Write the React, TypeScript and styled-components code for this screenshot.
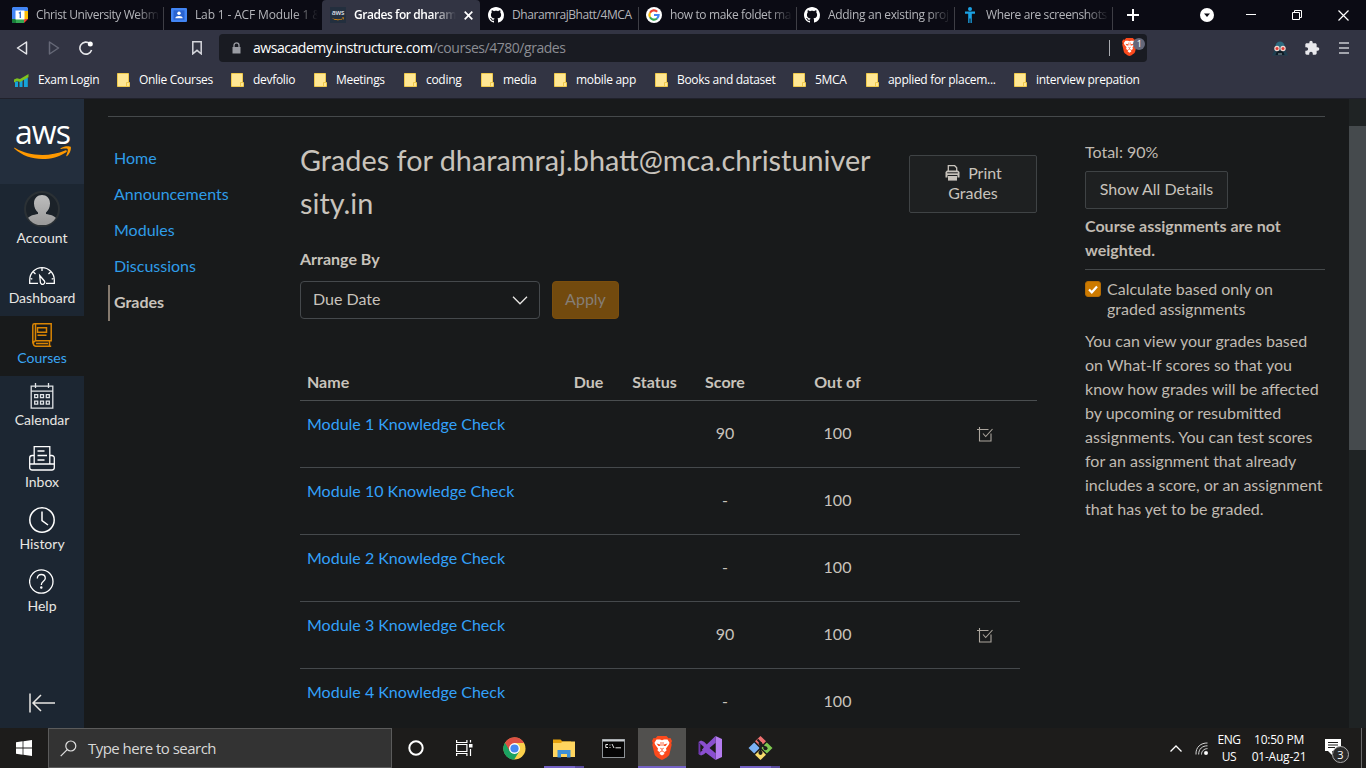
import React from "react";
import styled, { createGlobalStyle, css } from "styled-components";

const GlobalStyle = createGlobalStyle`
  * { box-sizing: border-box; }
  html, body { margin: 0; padding: 0; background: #181a1b; overflow: hidden; }
  svg { display: block; flex: none; }
`;

const ui = `"Open Sans", "Noto Sans", sans-serif`;
const lato = `Lato, "Open Sans", sans-serif`;

const Screen = styled.div`
  width: 1366px;
  height: 768px;
  display: flex;
  flex-direction: column;
  overflow: hidden;
  background: #181a1b;
`;

/* ---------- browser chrome ---------- */
const TabStrip = styled.div`
  height: 30px;
  flex: none;
  display: flex;
  padding-left: 5px;
  background: #0b0b14;
`;

const Tab = styled.div<{ $w?: number; $pad?: number; $active?: boolean; $line?: boolean }>`
  width: ${(p) => p.$w ?? 158}px;
  height: 30px;
  flex: none;
  display: flex;
  align-items: center;
  gap: 8px;
  padding: 0 ${(p) => (p.$active ? 7 : 4)}px 0 ${(p) => p.$pad ?? 7}px;
  color: ${(p) => (p.$active ? "#fff" : "#b4b5ba")};
  font: ${(p) => (p.$active ? 600 : 400)} 12px/30px ${ui};
  ${(p) => p.$active && css`background: #323443; border-radius: 4px 4px 0 0;`}
  ${(p) =>
    p.$line &&
    css`
      background: linear-gradient(#3e3e45, #3e3e45) right 0 bottom 0 / 1px 23px no-repeat;
    `}
`;

const TabTitle = styled.div<{ $spacing: number; $fade?: boolean }>`
  flex: 1;
  min-width: 0;
  overflow: hidden;
  white-space: nowrap;
  letter-spacing: ${(p) => p.$spacing}px;
  ${(p) => p.$fade && css`mask-image: linear-gradient(90deg, #000 calc(100% - 24px), transparent);`}
`;

const WindowButtons = styled.div`
  flex: 1;
  display: flex;
  align-items: center;
  height: 30px;
  padding-left: 14px;
`;

const Gap = styled.span<{ $w: number }>`
  flex: none;
  width: ${(p) => p.$w}px;
`;

const Toolbar = styled.div`
  height: 36px;
  flex: none;
  display: flex;
  align-items: center;
  background: #323443;
  padding-left: 15px;
`;

const AddressBar = styled.div`
  width: 928px;
  height: 28px;
  flex: none;
  display: flex;
  align-items: center;
  margin-left: 15px;
  padding: 0 0 0 13px;
  border-radius: 4px;
  background: #191b22;
  color: #8b8d93;
  font: 400 14px/28px ${ui};
  letter-spacing: -0.46px;
`;

const Address = styled.div`
  flex: 1;
  padding-left: 12px;
  white-space: nowrap;
  b { font-weight: 400; color: #fff; }
`;

const ShieldWrap = styled.div`
  position: relative;
  width: 25px;
  height: 20px;
  margin-left: 10px;
`;

const ShieldCount = styled.span`
  position: absolute;
  left: 11px;
  top: 0;
  width: 12px;
  height: 12px;
  border-radius: 6px;
  background: #646779;
  color: #fff;
  font: 400 9px/12px ${ui};
  text-align: center;
`;

const Bookmarks = styled.div`
  height: 33px;
  flex: none;
  display: flex;
  background: #323443;
  border-bottom: 1px solid #20212b;
  padding-left: 14px;
`;

const Bookmark = styled.div<{ $w: number }>`
  width: ${(p) => p.$w}px;
  flex: none;
  display: flex;
  align-items: center;
  gap: 9px;
  height: 28px;
  white-space: nowrap;
  color: #fff;
  font: 400 12px/28px ${ui};
  letter-spacing: -0.3px;
`;

/* ---------- page ---------- */
const Page = styled.div`
  height: 629px;
  flex: none;
  display: flex;
  overflow: hidden;
  font-family: ${lato};
  color: #c8c3bc;
`;

const Rail = styled.nav`
  width: 84px;
  flex: none;
  display: flex;
  flex-direction: column;
  background: #1c2632;
`;

const RailLogo = styled.div`
  height: 85px;
  display: flex;
  flex-direction: column;
  align-items: center;
  background: #232e3d;
  color: #fff;
  padding: 13px 0 0 1px;
  font: 400 32px/40px "Open Sans", sans-serif;
  letter-spacing: -1px;
  svg { margin-top: -6px; }
`;

const RailItem = styled.div<{ $h: number; $icon: number; $active?: boolean }>`
  height: ${(p) => p.$h}px;
  flex: none;
  display: flex;
  flex-direction: column;
  align-items: center;
  justify-content: flex-end;
  padding-bottom: 8px;
  background: ${(p) => (p.$active ? "#181a1b" : "transparent")};
  color: ${(p) => (p.$active ? "#3aa6f5" : "#e8e6e3")};
  font: 400 14px/20px ${lato};
  svg { margin-bottom: ${(p) => p.$icon}px; }
`;

const Collapse = styled.div`
  margin-top: auto;
  padding: 0 0 15px 28px;
`;

const Body = styled.div`
  width: 1265px;
  flex: none;
  display: flex;
  flex-direction: column;
  padding: 17px 24px 0;
`;

const Columns = styled.div`
  display: flex;
  border-top: 1px solid #45494b;
`;

const CourseNav = styled.nav`
  width: 192px;
  flex: none;
  padding-top: 24px;
`;

const CourseLink = styled.div<{ $active?: boolean }>`
  height: 36px;
  padding-left: ${(p) => (p.$active ? 4 : 6)}px;
  border-left: ${(p) => (p.$active ? "2px solid #857a6e" : "none")};
  color: ${(p) => (p.$active ? "#c8c3bc" : "#2f9de8")};
  font: ${(p) => (p.$active ? 700 : 400)} 16px/34px ${lato};
`;

const Main = styled.main`
  width: 737px;
  flex: none;
  padding-top: 22px;
`;

const TitleRow = styled.div`
  display: flex;
  justify-content: space-between;
  height: 109px;
`;

const Title = styled.h1`
  margin: 0;
  width: 576px;
  font: 400 28.8px/43px ${lato};
  white-space: nowrap;
`;

const OutlineButton = styled.button`
  padding: 0;
  display: flex;
  flex-direction: column;
  align-items: center;
  justify-content: center;
  border: 1px solid #3f4345;
  border-radius: 2px;
  background: #1e2021;
  color: #c8c3bc;
  font: 400 16px/20px ${lato};
`;

const PrintButton = styled(OutlineButton)`
  width: 128px;
  height: 58px;
  margin-top: 16px;
  padding-bottom: 2px;
  span { display: flex; align-items: center; gap: 8px; padding-left: 1px; }
`;

const DetailsButton = styled(OutlineButton)`
  width: 143px;
  height: 38px;
  margin-top: 7px;
  padding-bottom: 2px;
`;

const FieldLabel = styled.div`
  height: 24px;
  font: 700 16px/22px ${lato};
`;

const Controls = styled.div`
  display: flex;
  gap: 12px;
  margin-top: 9px;
`;

const Select = styled.div`
  width: 240px;
  height: 38px;
  display: flex;
  align-items: center;
  justify-content: space-between;
  padding: 0 11px 0 12px;
  border: 1px solid #45494c;
  border-radius: 4px;
  font: 400 16px/20px ${lato};
  span { padding-bottom: 2px; }
`;

const Apply = styled.button`
  width: 67px;
  height: 38px;
  padding: 0 0 2px;
  border: 1px solid #7a4e0d;
  border-radius: 4px;
  background: #724a0e;
  color: #857e76;
  font: 400 16px/20px ${lato};
`;

const gridColumns = css`
  display: grid;
  grid-template-columns: 260px 57px 75px 66px 159px 103px;
  font-size: 16px;
`;

const TableHead = styled.div`
  ${gridColumns}
  height: 37px;
  margin-top: 45px;
  border-bottom: 1px solid #4a4e50;
  font: 700 16px/36px ${lato};
  text-align: center;
  span:first-child { text-align: left; padding-left: 7px; }
`;

const TableRow = styled.div`
  ${gridColumns}
  width: 720px;
  height: 67px;
  border-bottom: 1px solid #45494c;
  line-height: 64px;
  text-align: center;
`;

const AssignmentName = styled.a`
  padding-left: 7px;
  line-height: 46px;
  text-align: left;
  color: #33a1fa;
`;

const CheckCell = styled.div`
  display: flex;
  align-items: center;
  padding-left: 60px;
`;

const Aside = styled.aside`
  width: 240px;
  flex: none;
  margin-left: 48px;
  padding-top: 23px;
  font: 400 16px/24px ${lato};
  color: #c0bab2;
`;

const Weighted = styled.div`
  height: 57px;
  margin-top: 4px;
  padding-top: 1px;
  font-weight: 700;
  border-bottom: 1px solid #45494b;
`;

const CheckLabel = styled.div`
  display: flex;
  gap: 6px;
  padding-top: 9px;
  line-height: 20px;
`;

const CheckBox = styled.span`
  width: 16px;
  height: 16px;
  flex: none;
  margin-top: 2px;
  display: flex;
  align-items: center;
  justify-content: center;
  border: 1px solid #b56c04;
  border-radius: 3px;
  background: #cc7a00;
`;

const Explain = styled.p`
  margin: 10px 0 0;
  white-space: nowrap;
`;

const ScrollTrack = styled.div`
  width: 17px;
  flex: none;
  padding-top: 27px;
  background: #1f2324;
`;

const ScrollThumb = styled.div`
  height: 324px;
  background: #454a4d;
`;

/* ---------- taskbar ---------- */
const Taskbar = styled.div`
  height: 40px;
  flex: none;
  display: flex;
  background: #1d1c1b;
  color: #fff;
`;

const Start = styled.div`
  width: 48px;
  height: 40px;
  display: flex;
  align-items: center;
  justify-content: center;
`;

const Search = styled.div`
  width: 344px;
  height: 40px;
  display: flex;
  align-items: center;
  gap: 11px;
  padding-left: 11px;
  border: 1px solid #5b5b5b;
  background: #333;
  color: #d8d8d8;
  font: 400 15px/38px ${ui};
  letter-spacing: -0.53px;
`;

const TaskIcon = styled.div<{ $w: number; $on?: boolean; $line?: boolean }>`
  width: ${(p) => p.$w}px;
  height: 40px;
  flex: none;
  display: flex;
  align-items: center;
  justify-content: center;
  background: ${(p) => (p.$on ? "#51504e" : "transparent")};
  ${(p) =>
    p.$line &&
    css`
      background: linear-gradient(90deg, #7462c4 0 31px, #57499a 31px 40px) center bottom / 40px 2px no-repeat;
    `}
  ${(p) => p.$on && css`box-shadow: inset 0 -2px #7462c4;`}
`;

const Tray = styled.div`
  margin-left: auto;
  width: 198px;
  display: flex;
  align-items: center;
`;

const TrayText = styled.div<{ $w: number; $ml: number; $spacing: number }>`
  width: ${(p) => p.$w}px;
  margin-left: ${(p) => p.$ml}px;
  padding-bottom: 1px;
  text-align: center;
  white-space: nowrap;
  font: 400 12px/17px ${ui};
  letter-spacing: ${(p) => p.$spacing}px;
`;

const Notice = styled.div`
  position: relative;
  width: 26px;
  height: 26px;
  margin: 8px 0 0 17px;
`;

const NoticeCount = styled.span`
  position: absolute;
  left: 7px;
  top: 7px;
  width: 17px;
  height: 17px;
  border: 1px solid #aaa;
  border-radius: 9px;
  background: #2b2b2b;
  font: 400 11px/15px ${ui};
  text-align: center;
`;

const ShowDesktop = styled.div`
  width: 5px;
  height: 40px;
  margin-left: auto;
  border-left: 1px solid #6a6a6a;
`;

/* ---------- drawings ---------- */
const GithubIcon = () => (
  <svg width="16" height="16" viewBox="0 0 16 16" fill="#fff">
    <path d="M8 0C3.58 0 0 3.58 0 8c0 3.54 2.29 6.53 5.47 7.59.4.07.55-.17.55-.38 0-.19-.01-.82-.01-1.49-2.01.37-2.53-.49-2.69-.94-.09-.23-.48-.94-.82-1.13-.28-.15-.68-.52-.01-.53.63-.01 1.08.58 1.23.82.72 1.21 1.87.87 2.33.66.07-.52.28-.87.51-1.07-1.78-.2-3.64-.89-3.64-3.95 0-.87.31-1.59.82-2.15-.08-.2-.36-1.02.08-2.12 0 0 .67-.21 2.2.82.64-.18 1.32-.27 2-.27s1.36.09 2 .27c1.53-1.04 2.2-.82 2.2-.82.44 1.1.16 1.92.08 2.12.51.56.82 1.27.82 2.15 0 3.07-1.87 3.75-3.65 3.95.29.25.54.73.54 1.48 0 1.07-.01 1.93-.01 2.2 0 .21.15.46.55.38A8.01 8.01 0 0 0 16 8c0-4.42-3.58-8-8-8z" />
  </svg>
);

const CalendarFavicon = () => (
  <svg width="16" height="16" viewBox="0 0 16 16">
    <path d="M1 0h14l1 1v3h-4v8H4v4H1l-1-1V1z" fill="#4285f4" />
    <path d="M12 4h4v8h-4z" fill="#fbbc04" />
    <path d="M4 12h8v4H4z" fill="#34a853" />
    <path d="M0 12h4v4H1l-1-1z" fill="#188038" />
    <path d="M12 12h4l-4 4z" fill="#ea4335" />
    <path d="M3.5 3.5h9v9h-9z" fill="#fff" />
    <path d="M6.800 6.300 8.300 5.400V11" fill="none" stroke="#2f6fd8" strokeWidth="1.300" />
  </svg>
);

const ClassroomFavicon = () => (
  <svg width="16" height="16" viewBox="0 0 16 16">
    <rect y="1" width="16" height="14" rx="1" fill="#4285f4" />
    <rect x="2.500" y="3.300" width="11" height="9.400" fill="#2a63d0" />
    <circle cx="8" cy="6.300" r="1.700" fill="#fff" />
    <path d="M4.300 11.200c0-3 7.400-3 7.400 0z" fill="#fff" />
  </svg>
);

const Smile = ({ w, h }: { w: number; h: number }) => (
  <svg width={w} height={h} viewBox="0 0 57 14" fill="#ff9900">
    <path d="M.3 2.600C-.2 1.800.5 1.500 1.200 2 15 10.500 36 11 51 4.500c1.400-.6 2.600.7 1.200 1.700C37 16.200 14 15.500.3 2.600z" />
    <path d="M46.500 2.300C49.500-.1 55.500-.3 56.600.7c1 1.200-.4 7-3.400 9.300-.7.5-1.200.1-.9-.6.9-2.200 2-5.500 1.300-6.300-.7-.9-4.400-.5-6.400-.2-.8.1-1-.2-.7-.6z" />
  </svg>
);

const AwsFavBox = styled.div`
  width: 16px;
  height: 16px;
  flex: none;
  display: flex;
  flex-direction: column;
  align-items: center;
  background: #232f3e;
  color: #d9dce0;
  font: 600 7px/6px "Open Sans", sans-serif;
  padding-top: 3px;
  letter-spacing: -0.2px;
  svg { margin-top: 1px; }
`;

const GoogleFavicon = () => (
  <svg width="16" height="16" viewBox="0 0 16 16">
    <circle cx="8" cy="8" r="8" fill="#fff" />
    <g fill="none" strokeWidth="2.200">
      <path d="M4 5.700A4.600 4.600 0 0 1 11.200 4.700" stroke="#ea4335" />
      <path d="M4 5.700A4.600 4.600 0 0 0 4 10.300" stroke="#fbbc05" />
      <path d="M4 10.300A4.600 4.600 0 0 0 11 11.500" stroke="#34a853" />
      <path d="M11 11.500A4.600 4.600 0 0 0 12.600 8H8" stroke="#4285f4" />
    </g>
  </svg>
);

const PersonFavicon = () => (
  <svg width="16" height="16" viewBox="0 0 16 16" fill="#1ba1e2">
    <circle cx="8" cy="2" r="2" />
    <path d="M3 4.600h10v2.200H9.800V16H8.500v-4.500h-1V16H6.200V6.800H3z" />
  </svg>
);

const Folder = () => (
  <svg width="13" height="14" viewBox="0 0 13 14">
    <path d="M.5.5h11v9h1v4H.5z" fill="#ffe794" stroke="#efc94c" />
    <path d="M9.500 13.500v-4h2" fill="none" stroke="#efc94c" />
  </svg>
);

const ExamIcon = () => (
  <svg width="15" height="13" viewBox="0 0 15 13">
    <path d="M1 7.500h3V13H1zM5.500 6H8.500v7h-3zM10 4h3.800v9H10z" fill="#16a3d8" />
    <path d="M0 5.500 3 4.200l3 .8L14.500 0v3.200L6 8 3 7 0 8.500z" fill="#7fc21e" />
  </svg>
);

const Lion = ({ w, h }: { w: number; h: number }) => (
  <svg width={w} height={h} viewBox="0 0 20 24">
    <path d="M5.500 0h9l2 2.200 2-.2L20 5l-.8 2 .5 1.800-2.300 9.700c-.6 2-5 4.500-7.400 5.500-2.400-1-6.800-3.500-7.400-5.500L.3 8.800.8 7 0 5l1.500-3 2 .2z" fill="#fb4a1d" />
    <path d="m10 4.200 2-.6 3.500-.1 2 3.300-.6 1.800-2.900 3.800.5 2.200-2.400 1.800.3 1.500L10 19.500l-2.400-1.600.3-1.500-2.400-1.800.5-2.200-2.900-3.800-.6-1.800 2-3.300 3.500.1z" fill="#fff" />
    <path d="m4.500 7.600 3.800.8-.4 1.500-1.500.2zM15.500 7.600l-3.800.8.4 1.500 1.500.2z" fill="#fb4a1d" />
    <path d="m8.200 12.200 1.800.9 1.800-.9M10 13v2M7.500 16.300l2.500-1.400 2.500 1.400M9 6v4M11 6v4" fill="none" stroke="#fb4a1d" strokeWidth=".8" />
  </svg>
);

const VaderIcon = () => (
  <svg width="16" height="15" viewBox="0 0 16 15">
    <path d="M3 5C4-.5 12-.5 13 5l1 5 2 4.500H0L2 10z" fill="#1f3f50" />
    <path d="M3.500 4.500C4.500-.8 11.500-.8 12.500 4.500L12 6.500H4z" fill="#2d6c80" />
    <path d="M5 10h6l1.500 4h-9z" fill="#0f1c25" />
    <circle cx="5" cy="7.500" r="2.700" fill="#f3d9d2" /><circle cx="11" cy="7.500" r="2.700" fill="#f3d9d2" />
    <circle cx="5" cy="7.500" r="1.500" fill="#e03a33" /><circle cx="11" cy="7.500" r="1.500" fill="#e03a33" />
    <path d="M7 12v2M9 12v2" stroke="#8fa0a8" />
  </svg>
);

const line = { fill: "none", stroke: "#fff", strokeWidth: 1.3 } as const;

const Avatar = () => (
  <svg width="36" height="36" viewBox="0 0 36 36">
    <defs>
      <clipPath id="face"><circle cx="18" cy="18" r="16.500" /></clipPath>
      <linearGradient id="skin" x1="0" y1="0" x2="0" y2="1"><stop offset="0" stopColor="#bdbdbd" /><stop offset="1" stopColor="#999" /></linearGradient>
    </defs>
    <circle cx="18" cy="18" r="17" fill="#1b2229" stroke="#2b3135" strokeWidth="2" />
    <g clipPath="url(#face)" fill="url(#skin)">
      <path d="M18 4c4.500 0 8 3 8 8.500 0 3.800-1.700 7-4 9V23c4.500 1 9 1.500 10.500 5L29 34H7l-3.500-6C5 24.500 9.500 24 14 23v-1.500c-2.300-2-4-5.200-4-9C10 7 13.500 4 18 4z" />
    </g>
  </svg>
);

const DashboardIcon = () => (
  <svg width="26" height="18" viewBox="0 0 26 18" {...line}>
    <path d="M9 16.400H.7V13C.7 6.200 6.200.7 13 .7S25.300 6.200 25.300 13v3.400H17" />
    <path d="M10.700 8.500 15.400 14a2.200 2.200 0 1 1-4 1.700zM13 1v3M4.400 5l2.100 2M21.600 5l-2.100 2M1.500 11.500l1.800.7M24.500 11.500l-1.800.7" />
  </svg>
);

const BookIcon = () => (
  <svg width="20" height="24" viewBox="0 0 20 24" fill="none" stroke="#d88404" strokeWidth="1.500">
    <path d="M.8 20.500V2.500C.8 1.500 1.500.8 2.500.8h16.700v16.900H3.600a2.800 2.800 0 0 0 0 5.500h15.600M3.500 1v16.500M17.500 17.700v5.500M4 20.500h12" />
    <path d="M5.500 4.800h9v4.500h-9zM5.500 12.300h9" />
  </svg>
);

const CalendarIcon = () => (
  <svg width="24" height="26" viewBox="0 0 24 26" {...line} stroke="#e0e3e6">
    <path d="M1.200 3.200h21.600v22H1.200zM1 8.200h22" />
    <path d="M5.500 0v5M18.500 0v5" />
    <path d="M4.700 11.700h3v3h-3zM10.500 11.700h3v3h-3zM16.300 11.700h3v3h-3zM4.700 18.200h3v3h-3zM10.500 18.200h3v3h-3zM16.300 18.200h3v3h-3z" />
  </svg>
);

const InboxIcon = () => (
  <svg width="26" height="25" viewBox="0 0 26 25" {...line}>
    <path d="M5 9.500H3.200a2.500 2.500 0 0 0-2.500 2.500v9.500c0 1.500 1 2.500 2.500 2.500h19.600c1.500 0 2.500-1 2.500-2.500V12a2.500 2.500 0 0 0-2.500-2.500H21" />
    <path d="M5.200 18V.7h15.600V18M.7 18h24.600M8.500 5h7M8.500 9.500h9.500M8.500 14h7" />
  </svg>
);

const HistoryIcon = () => (
  <svg width="26" height="26" viewBox="0 0 26 26" {...line} strokeWidth={1.5}>
    <circle cx="13" cy="13" r="12.200" />
    <path d="M13 4.500v9l6 4.500" />
  </svg>
);

const HelpIcon = () => (
  <svg width="26" height="25" viewBox="0 0 26 25" {...line}>
    <circle cx="12.300" cy="12.500" r="11.700" />
    <path d="M8.300 9.500c0-2.500 1.800-4 4-4s4 1.500 4 3.700c0 3.300-4 3-4 6.800" />
    <circle cx="12.300" cy="18.600" r=".6" fill="#fff" />
  </svg>
);

const CheckScore = () => (
  <svg width="16" height="15" viewBox="0 0 16 15" fill="none" stroke="#aca69e" strokeWidth="1.100">
    <path d="M0 2.500h11.500M2.500 0v14h11.500V6.500M6 6.500 8.700 9.500 15.500 2" />
  </svg>
);

const PrinterIcon = () => (
  <svg width="15" height="16" viewBox="0 0 15 16">
    <path d="M3.300 6V.7h6.400l2 2V6" fill="none" stroke="#c8c3bc" strokeWidth="1.300" />
    <path d="M2 5.500h11l1.500 1.600V12.500H12.500V10h-10v2.500H.5V7z" fill="#c8c3bc" />
    <path d="M2.200 7.800h10.600" stroke="#1e2021" />
    <path d="M3 11h9v4.600H3z" fill="#c8c3bc" />
  </svg>
);

const ChromeIcon = () => (
  <svg width="23" height="23" viewBox="0 0 24 24">
    <circle cx="12" cy="12" r="11.500" fill="#fbd04b" />
    <path d="M12 12 2 6.200A11.500 11.500 0 0 1 22 6.200H12z" fill="#dd5044" />
    <path d="M2 6.200A11.500 11.500 0 0 0 11.700 23.500L17 14.900 12 12z" fill="#1ba261" />
    <path d="M2 6.200 7 14.900 12 12V6.200z" fill="#dd5044" />
    <path d="m2 6.200 5 8.700L12 17.800l-1.500 5.600A11.500 11.500 0 0 1 2 6.200z" fill="#1ba261" />
    <circle cx="12" cy="12" r="5.700" fill="#fff" />
    <circle cx="12" cy="12" r="4.300" fill="#4688f1" />
  </svg>
);

const ExplorerIcon = () => (
  <svg width="22" height="19" viewBox="0 0 22 19">
    <path d="M0 .5h7.500l2 2H18V5H0z" fill="#e6a10c" />
    <path d="M0 4h8l1.500-1.500H22V18H0z" fill="#ffd55f" />
    <path d="M4.500 18.500V11h13v7.500H14V15H8v3.500z" fill="#3d8fd6" />
  </svg>
);

const TerminalIcon = () => (
  <svg width="23" height="19" viewBox="0 0 23 19">
    <rect x=".5" y=".5" width="22" height="18" fill="#050505" stroke="#8d9296" />
    <path d="M.5 1.500h22" stroke="#c9cdd0" strokeWidth="2" />
    <path d="M6 5.500H3.800v3H6M8 5.500v1M8 8v1M10 5l2 4M13.500 8.800h5.500" stroke="#e8e8e8" fill="none" />
  </svg>
);

const VsIcon = () => (
  <svg width="25" height="24" viewBox="0 0 25 24">
    <path d="M17.500 0 24 3v18l-6.500 3z" fill="#b57cf0" />
    <path d="M17.500 0v7L6 18.300l-3 1.200L.5 18l6.500-6L.5 6 3 4.500l3 1.200L17.500 17v7L3.500 13.500" fill="#8a4fd0" />
    <path d="M.5 6v12l2 .8V8.500z" fill="#6f37ae" />
    <path d="M17.500 7v10L11.500 12z" fill="#1d1c1b" />
    <path d="M2.700 9v6L5.300 12z" fill="#1d1c1b" />
  </svg>
);

const GitIcon = () => (
  <svg width="25" height="24" viewBox="0 0 25 24">
    <path d="m12.500 0 5.500 5.300-5.500 5.300L7 5.300z" fill="#ee7070" />
    <path d="m6.200 6.400 5.500 5.600-5.500 5.600L.5 12z" fill="#7bb2f5" />
    <path d="m18.800 6.400 5.700 5.600-5.700 5.600-5.500-5.600z" fill="#7ec850" />
    <path d="m12.500 13.400 5.500 5.300-5.500 5.300L7 18.700z" fill="#f8dc6c" />
    <path d="M9.500 3.500 12.500 6.800V17M12.500 7.500l5 4.500" stroke="#1c1c1c" strokeWidth="2" fill="none" />
    <circle cx="12.500" cy="7.500" r="1.800" fill="#1c1c1c" /><circle cx="12.500" cy="16.800" r="2.100" fill="#1c1c1c" /><circle cx="17.500" cy="12.200" r="2" fill="#1c1c1c" />
  </svg>
);

const tabsAfter = [
  { title: "DharamrajBhatt/4MCA", icon: <GithubIcon />, s: -0.42, w: 159, pad: 8 },
  { title: "how to make foldet ma", icon: <GoogleFavicon />, s: -0.38, fade: true },
  { title: "Adding an existing proj", icon: <GithubIcon />, s: -0.32, fade: true },
  { title: "Where are screenshots", icon: <PersonFavicon />, s: -0.38, fade: true },
];

const folders: [string, number][] = [
  ["Onlie Courses", 114],
  ["devfolio", 83],
  ["Meetings", 90],
  ["coding", 77],
  ["media", 73],
  ["mobile app", 101],
  ["Books and dataset", 138],
  ["5MCA", 73],
  ["applied for placem...", 148],
  ["interview prepation", 130],
];

const assignments = [
  { name: "Module 1 Knowledge Check", score: "90", checked: true },
  { name: "Module 10 Knowledge Check", score: "-" },
  { name: "Module 2 Knowledge Check", score: "-" },
  { name: "Module 3 Knowledge Check", score: "90", checked: true },
  { name: "Module 4 Knowledge Check", score: "-" },
];

export default function App() {
  return (
    <Screen>
      <GlobalStyle />
      <TabStrip>
        <Tab $w={159} $line><CalendarFavicon /><TabTitle $fade $spacing={-0.4}>Christ University Webm</TabTitle></Tab>
        <Tab><ClassroomFavicon /><TabTitle $fade $spacing={-0.15}>Lab 1 - ACF Module 1 &amp;</TabTitle></Tab>
        <Tab $active $pad={8}>
          <AwsFavBox>aws<Smile w={12} h={4} /></AwsFavBox>
          <TabTitle $fade $spacing={-0.45}>Grades for dharam</TabTitle>
          <svg width="9" height="9" viewBox="0 0 9 9" stroke="#fff" strokeWidth="1.700"><path d="m.7.7 7.600 7.600M8.300.7.7 8.300" /></svg>
        </Tab>
        {tabsAfter.map((t) => (
          <Tab key={t.title} $line $w={t.w} $pad={t.pad}>{t.icon}<TabTitle $fade={t.fade} $spacing={t.s}>{t.title}</TabTitle></Tab>
        ))}
        <WindowButtons>
          <svg width="12" height="12" viewBox="0 0 12 12" stroke="#fff" strokeWidth="2"><path d="M6 0v12M0 6h12" /></svg>
          <Gap $w={61} />
          <svg width="14" height="14" viewBox="0 0 14 14"><circle cx="7" cy="7" r="7" fill="#fff" /><path d="M4 5.500h6L7 9z" fill="#0b0b14" /></svg>
          <Gap $w={32} />
          <svg width="10" height="10" viewBox="0 0 10 10" stroke="#fff"><path d="M0 4.500h10" /></svg>
          <Gap $w={36} />
          <svg width="10" height="10" viewBox="0 0 10 10" stroke="#fff" fill="none"><path d="M.5 2.500h7v7h-7zM2.500 2.500v-2h7v7h-2" /></svg>
          <Gap $w={36} />
          <svg width="11" height="11" viewBox="0 0 11 11" stroke="#fff" strokeWidth="1.200"><path d="m.5.5 10 10M10.500.5l-10 10" /></svg>
        </WindowButtons>
      </TabStrip>
      <Toolbar>
        <svg width="14" height="14" viewBox="0 0 14 14" fill="none" stroke="#e6e6ea" strokeWidth="1.500" strokeLinejoin="round"><path d="M11.500 1v12L2.500 7z" /></svg>
        <Gap $w={19} />
        <svg width="13" height="14" viewBox="0 0 13 14" fill="none" stroke="#666877" strokeWidth="1.500" strokeLinejoin="round"><path d="M1.500 1v12l9-6z" /></svg>
        <Gap $w={18} />
        <svg width="14" height="14" viewBox="0 0 14 14"><path d="M11 2.700A6 6 0 1 0 12.600 9" fill="none" stroke="#e6e6ea" strokeWidth="1.600" /><circle cx="11.300" cy="3" r="2.500" fill="#fff" /></svg>
        <Gap $w={99} />
        <svg width="10" height="14" viewBox="0 0 10 14" fill="none" stroke="#d5d6dc" strokeWidth="1.500"><path d="M.8.8h8.400v12L5 9.300.8 12.800z" /></svg>
        <Gap $w={2} />
        <AddressBar>
          <svg width="9" height="12" viewBox="0 0 9 12"><path d="M.5 5h8v6.500h-8z" fill="#9a9ca3" /><path d="M2 5V3.200C2 .2 7 .2 7 3.200V5" fill="none" stroke="#9a9ca3" strokeWidth="1.300" /></svg>
          <Address><b>awsacademy.instructure.com</b>/courses/4780/grades</Address>
          <svg width="1" height="16" viewBox="0 0 1 16"><path d="M.5 0v16" stroke="#a9abb0" /></svg>
          <Gap $w={2} />
          <ShieldWrap><Lion w={15} h={18} /><ShieldCount>1</ShieldCount></ShieldWrap>
        </AddressBar>
        <Gap $w={125} />
        <VaderIcon />
        <Gap $w={16} />
        <svg width="16" height="16" viewBox="0 0 24 24" fill="#e8e8ec"><path d="M20.500 11H19V7c0-1.100-.9-2-2-2h-4V3.500a2.500 2.500 0 0 0-5 0V5H4c-1.100 0-2 .9-2 2v3.800h1.500a2.700 2.700 0 0 1 0 5.400H2V20c0 1.100.9 2 2 2h3.800v-1.500a2.700 2.700 0 0 1 5.400 0V22H17c1.100 0 2-.9 2-2v-4h1.500a2.500 2.500 0 0 0 0-5z" /></svg>
        <Gap $w={19} />
        <svg width="10" height="12" viewBox="0 0 10 12" stroke="#c9cad1" strokeWidth="1.600"><path d="M0 1h10M0 6h10M0 11h10" /></svg>
      </Toolbar>
      <Bookmarks>
        <Bookmark $w={103}><ExamIcon />Exam Login</Bookmark>
        {folders.map(([name, w]) => <Bookmark key={name} $w={w}><Folder />{name}</Bookmark>)}
      </Bookmarks>
      <Page>
        <Rail>
          <RailLogo>aws<Smile w={57} h={14} /></RailLogo>
          <RailItem $h={72} $icon={1}><Avatar />Account</RailItem>
          <RailItem $h={60} $icon={3}><DashboardIcon />Dashboard</RailItem>
          <RailItem $h={60} $icon={1} $active><BookIcon />Courses</RailItem>
          <RailItem $h={62} $icon={1}><CalendarIcon />Calendar</RailItem>
          <RailItem $h={62} $icon={1}><InboxIcon />Inbox</RailItem>
          <RailItem $h={62} $icon={1}><HistoryIcon />History</RailItem>
          <RailItem $h={62} $icon={2}><HelpIcon />Help</RailItem>
          <Collapse>
            <svg width="28" height="20" viewBox="0 0 28 20" stroke="#e8e6e3" fill="none" strokeWidth="1.500"><path d="M2 .5v19M27 10H5M13 2 5 10l8 8" /></svg>
          </Collapse>
        </Rail>
        <Body>
          <Columns>
            <CourseNav>
              <CourseLink>Home</CourseLink>
              <CourseLink>Announcements</CourseLink>
              <CourseLink>Modules</CourseLink>
              <CourseLink>Discussions</CourseLink>
              <CourseLink $active>Grades</CourseLink>
            </CourseNav>
            <Main>
              <TitleRow>
                <Title>Grades for dharamraj.bhatt@mca.christuniver<br />sity.in</Title>
                <PrintButton><span><PrinterIcon />Print</span>Grades</PrintButton>
              </TitleRow>
              <FieldLabel>Arrange By</FieldLabel>
              <Controls>
                <Select>
                  <span>Due Date</span>
                  <svg width="16" height="9" viewBox="0 0 16 9" fill="none" stroke="#e8e6e3" strokeWidth="1.300"><path d="m1 .8 7 7 7-7" /></svg>
                </Select>
                <Apply>Apply</Apply>
              </Controls>
              <TableHead>
                <span>Name</span><span>Due</span><span>Status</span><span>Score</span><span>Out of</span>
              </TableHead>
              {assignments.map((a) => (
                <TableRow key={a.name}>
                  <AssignmentName>{a.name}</AssignmentName>
                  <span /><span /><span>{a.score}</span><span>100</span>
                  <CheckCell>{a.checked && <CheckScore />}</CheckCell>
                </TableRow>
              ))}
            </Main>
            <Aside>
              <div>Total: 90%</div>
              <DetailsButton>Show All Details</DetailsButton>
              <Weighted>Course assignments are not<br />weighted.</Weighted>
              <CheckLabel>
                <CheckBox><svg width="10" height="9" viewBox="0 0 10 9" fill="none" stroke="#fff" strokeWidth="2.200"><path d="m1 4.500 2.800 2.800L9 1.500" /></svg></CheckBox>
                <span>Calculate based only on<br />graded assignments</span>
              </CheckLabel>
              <Explain>
                You can view your grades based<br />on What-If scores so that you<br />know how grades will be affected<br />by upcoming or resubmitted<br />assignments. You can test scores<br />for an assignment that already<br />includes a score, or an assignment<br />that has yet to be graded.
              </Explain>
            </Aside>
          </Columns>
        </Body>
        <ScrollTrack><ScrollThumb /></ScrollTrack>
      </Page>
      <Taskbar>
        <Start><svg width="16" height="16" viewBox="0 0 16 16" fill="#fff"><path d="M0 2.200 6.600 1.300v6.300H0zM7.400 1.200 16 0v7.600H7.400zM0 8.400h6.600v6.300L0 13.800zM7.400 8.400H16V16l-8.600-1.200z" /></svg></Start>
        <Search>
          <svg width="17" height="17" viewBox="0 0 17 17" fill="none" stroke="#e0e0e0" strokeWidth="1.200"><circle cx="10.800" cy="6" r="5" /><path d="M7.200 9.700.7 16.200" /></svg>
          Type here to search
        </Search>
        <TaskIcon $w={48}><svg width="16" height="16" viewBox="0 0 16 16"><circle cx="8" cy="8" r="6.700" fill="none" stroke="#fff" strokeWidth="2" /></svg></TaskIcon>
        <TaskIcon $w={48}>
          <svg width="17" height="16" viewBox="0 0 17 16" fill="none" stroke="#fff" strokeWidth="1.200"><path d="M.6 0v2.500h10.300V0M.6 4.500h10.300v7H.6zM.6 16v-2.500h10.300V16M14.500 0v2.500M14.500 9v7" /><path d="M13 4h3.500v3.500H13z" fill="#fff" stroke="none" /></svg>
        </TaskIcon>
        <Gap $w={2} />
        <TaskIcon $w={49}><ChromeIcon /></TaskIcon>
        <TaskIcon $w={50} $line><ExplorerIcon /></TaskIcon>
        <TaskIcon $w={49}><TerminalIcon /></TaskIcon>
        <TaskIcon $w={48} $on><Lion w={20} h={24} /></TaskIcon>
        <TaskIcon $w={49}><VsIcon /></TaskIcon>
        <TaskIcon $w={50} $line><GitIcon /></TaskIcon>
        <Tray>
          <Gap $w={2} />
          <svg width="12" height="7" viewBox="0 0 12 7" fill="none" stroke="#fff" strokeWidth="1.300"><path d="m.5 6.500 5.500-5.500 5.500 5.500" /></svg>
          <Gap $w={13} />
          <svg width="13" height="13" viewBox="0 0 13 13" fill="none" stroke="#d6d6d6" strokeWidth="1"><path d="M1 12.500C.5 5 6 .8 12.500 1M3.700 12.500C3.500 7 7.500 3.700 12.500 3.800M6.500 12.500c0-3.500 2.500-5.800 6-5.900" /><circle cx="11" cy="11" r="1.700" fill="#fff" /></svg>
          <TrayText $w={26} $ml={8} $spacing={-0.45}>ENG<br />US</TrayText>
          <TrayText $w={58} $ml={8} $spacing={-0.22}>10:50 PM<br />01-Aug-21</TrayText>
          <Notice>
            <svg width="17" height="17" viewBox="0 0 17 17"><path d="M0 0h16v12H7v4l-4-4H0z" fill="#fff" /><path d="M3 3.500h10M3 6h10M3 8.500h7" stroke="#1d1c1b" /></svg>
            <NoticeCount>3</NoticeCount>
          </Notice>
          <ShowDesktop />
        </Tray>
      </Taskbar>
    </Screen>
  );
}
